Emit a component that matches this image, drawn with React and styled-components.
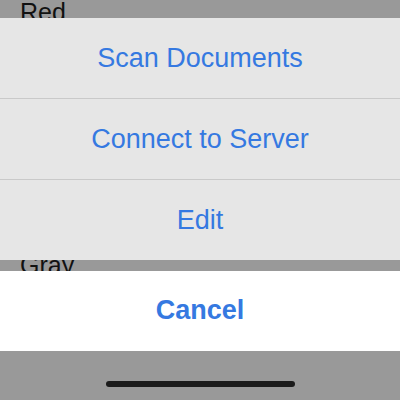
import React from "react";
import styled, { createGlobalStyle } from "styled-components";

const GlobalStyle = createGlobalStyle`
    body {
        margin: 0;
        font-family: "Liberation Sans", Arial, sans-serif;
    }
`;

const Screen = styled.div`
    position: relative;
    width: 400px;
    height: 400px;
    overflow: hidden;
    background: #999999;
`;

const ColorList = styled.ul`
    list-style: none;
    margin: 0;
    padding: 0 0 0 20px;
    display: flex;
    flex-direction: column;
`;

const ColorItem = styled.li`
    height: 42.2px;
    font-size: 25px;
    line-height: 25px;
    color: #111;
`;

const Overlay = styled.div`
    position: absolute;
    inset: 0;
    display: flex;
    flex-direction: column;
    padding-top: 18px;
`;

const Group = styled.div`
    display: flex;
    flex-direction: column;
    background: #e6e6e6;
`;

const Action = styled.button`
    height: ${(p) => (p.$last ? "80px" : "81px")};
    border: none;
    border-bottom: ${(p) => (p.$last ? "none" : "1px solid #c9c9c9")};
    background: transparent;
    color: #3579e1;
    font-family: "Liberation Sans", Arial, sans-serif;
    font-size: 27px;
    padding: 0;
`;

const CancelButton = styled.button`
    margin-top: 11px;
    height: 80px;
    border: none;
    background: #ffffff;
    color: #3579e1;
    font-family: "Liberation Sans", Arial, sans-serif;
    font-size: 27px;
    font-weight: bold;
    padding: 0 0 2px;
`;

const HomeIndicator = styled.div`
    align-self: center;
    margin-top: 30px;
    width: 189px;
    height: 6px;
    border-radius: 3px;
    background: #1b1b1b;
`;

const colors = ["Red", "Orange", "Yellow", "Green", "Blue", "Purple", "Gray"];
const actions = ["Scan Documents", "Connect to Server", "Edit"];

const App = () => {
    return (
        <>
            <GlobalStyle />
            <Screen>
                <ColorList>
                    {colors.map((c) => (
                        <ColorItem key={c}>{c}</ColorItem>
                    ))}
                </ColorList>
                <Overlay>
                    <Group>
                        {actions.map((a, i) => (
                            <Action key={a} $last={i === actions.length - 1}>
                                {a}
                            </Action>
                        ))}
                    </Group>
                    <CancelButton>Cancel</CancelButton>
                    <HomeIndicator />
                </Overlay>
            </Screen>
        </>
    );
};

export default App;
